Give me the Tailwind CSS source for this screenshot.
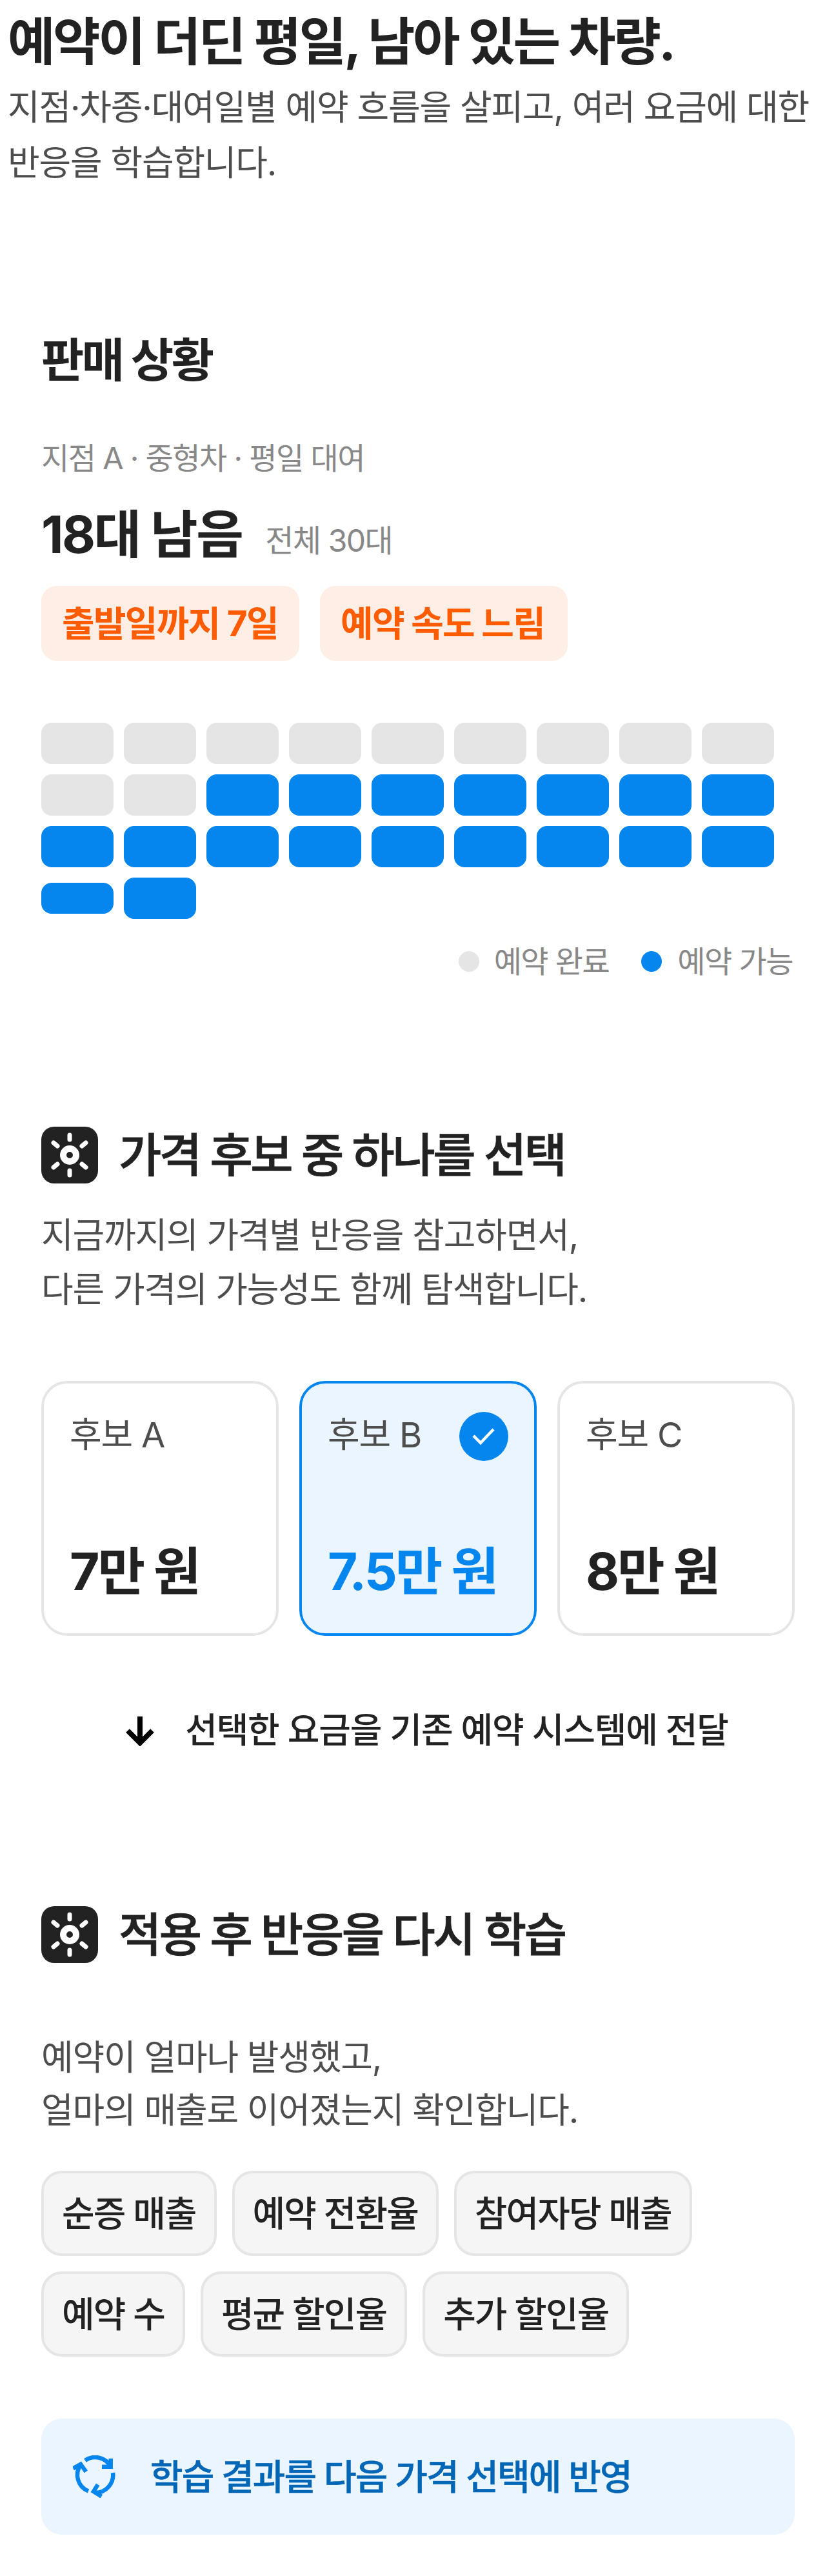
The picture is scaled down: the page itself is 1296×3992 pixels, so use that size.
<!DOCTYPE html>
<html lang="ko">
<head>
<meta charset="UTF-8">
<meta name="viewport" content="width=device-width, initial-scale=1.0">
<title>판매 상황</title>
<script src="https://cdn.jsdelivr.net/npm/@tailwindcss/browser@4"></script>
</head>
<body class="bg-white text-[#222222] font-['Inter','Noto_Sans_CJK_KR',sans-serif]">
<main class="w-[1296px] h-[3992px] overflow-hidden px-[12px] pt-[16px]">

  <!-- Intro -->
  <header>
    <h1 class="text-[80px] leading-[96px] font-bold tracking-[-3.5px]">예약이 더딘 평일, 남아 있는 차량.</h1>
    <p class="mt-[12px] text-[54px] leading-[86px] tracking-[-1.2px] text-[#4d4d4d]">지점·차종·대여일별 예약 흐름을 살피고, 여러 요금에 대한 반응을 학습합니다.</p>
  </header>

  <!-- Sales status -->
  <section class="px-[52px] mt-[218px]">
    <h2 class="text-[72px] leading-[88px] font-bold tracking-[-3.5px]">판매 상황</h2>
    <p class="mt-[78px] text-[47px] leading-[60px] tracking-[-1.5px] text-[#888888]">지점 A · 중형차 · 평일 대여</p>
    <div class="mt-[40px] flex items-end gap-[36px]">
      <strong class="text-[80px] leading-[96px] font-bold tracking-[-2.5px]">18대 남음</strong>
      <span class="text-[48px] leading-[76px] tracking-[-1.5px] text-[#888888]">전체 30대</span>
    </div>
    <div class="mt-[32px] flex gap-[32px]">
      <span class="w-[400px] h-[116px] pl-[32px] flex items-center rounded-[24px] bg-[#ffeee6] text-[#ff5c00] text-[55px] tracking-[-1.7px] font-bold">출발일까지 7일</span>
      <span class="w-[384px] h-[116px] pl-[32px] flex items-center rounded-[24px] bg-[#ffeee6] text-[#ff5c00] text-[55px] tracking-[-1.7px] font-bold">예약 속도 느림</span>
    </div>
    <div class="mt-[96px] flex flex-wrap items-center gap-[16px] w-[1136px]">
      <i class="block w-[112px] h-[64px] rounded-[16px] bg-[#e5e5e5]"></i>
      <i class="block w-[112px] h-[64px] rounded-[16px] bg-[#e5e5e5]"></i>
      <i class="block w-[112px] h-[64px] rounded-[16px] bg-[#e5e5e5]"></i>
      <i class="block w-[112px] h-[64px] rounded-[16px] bg-[#e5e5e5]"></i>
      <i class="block w-[112px] h-[64px] rounded-[16px] bg-[#e5e5e5]"></i>
      <i class="block w-[112px] h-[64px] rounded-[16px] bg-[#e5e5e5]"></i>
      <i class="block w-[112px] h-[64px] rounded-[16px] bg-[#e5e5e5]"></i>
      <i class="block w-[112px] h-[64px] rounded-[16px] bg-[#e5e5e5]"></i>
      <i class="block w-[112px] h-[64px] rounded-[16px] bg-[#e5e5e5]"></i>
      <i class="block w-[112px] h-[64px] rounded-[16px] bg-[#e5e5e5]"></i>
      <i class="block w-[112px] h-[64px] rounded-[16px] bg-[#e5e5e5]"></i>
      <i class="block w-[112px] h-[64px] rounded-[16px] bg-[#0486ee]"></i>
      <i class="block w-[112px] h-[64px] rounded-[16px] bg-[#0486ee]"></i>
      <i class="block w-[112px] h-[64px] rounded-[16px] bg-[#0486ee]"></i>
      <i class="block w-[112px] h-[64px] rounded-[16px] bg-[#0486ee]"></i>
      <i class="block w-[112px] h-[64px] rounded-[16px] bg-[#0486ee]"></i>
      <i class="block w-[112px] h-[64px] rounded-[16px] bg-[#0486ee]"></i>
      <i class="block w-[112px] h-[64px] rounded-[16px] bg-[#0486ee]"></i>
      <i class="block w-[112px] h-[64px] rounded-[16px] bg-[#0486ee]"></i>
      <i class="block w-[112px] h-[64px] rounded-[16px] bg-[#0486ee]"></i>
      <i class="block w-[112px] h-[64px] rounded-[16px] bg-[#0486ee]"></i>
      <i class="block w-[112px] h-[64px] rounded-[16px] bg-[#0486ee]"></i>
      <i class="block w-[112px] h-[64px] rounded-[16px] bg-[#0486ee]"></i>
      <i class="block w-[112px] h-[64px] rounded-[16px] bg-[#0486ee]"></i>
      <i class="block w-[112px] h-[64px] rounded-[16px] bg-[#0486ee]"></i>
      <i class="block w-[112px] h-[64px] rounded-[16px] bg-[#0486ee]"></i>
      <i class="block w-[112px] h-[64px] rounded-[16px] bg-[#0486ee]"></i>
      <i class="block w-[112px] h-[48px] rounded-[16px] bg-[#0486ee]"></i>
      <i class="block w-[112px] h-[64px] rounded-[16px] bg-[#0486ee]"></i>
    </div>
    <div class="mt-[36px] pr-[3px] flex justify-end items-center text-[47px] leading-[60px] tracking-[-1.5px] text-[#888888]">
      <i class="block w-[32px] h-[32px] rounded-full bg-[#e5e5e5] mr-[23px]"></i>
      <span>예약 완료</span>
      <i class="block w-[32px] h-[32px] rounded-full bg-[#0486ee] ml-[50px] mr-[24px]"></i>
      <span>예약 가능</span>
    </div>
  </section>

  <!-- Price candidates -->
  <section class="px-[52px] mt-[226px]">
    <div class="flex items-center gap-[32px]">
      <svg class="w-[88px] h-[88px] shrink-0" viewBox="0 0 88 88">
        <rect width="88" height="88" rx="20" fill="#222222"/>
        <circle cx="44" cy="44" r="10" fill="#222222" stroke="#ffffff" stroke-width="10"/>
        <path d="M44 13V20M44 68V75M19 25L25 30M69 25L63 30M19 63L25 58M69 63L63 58" stroke="#ffffff" stroke-width="7" stroke-linecap="round" fill="none"/>
      </svg>
      <h2 class="text-[72px] leading-[88px] font-medium tracking-[-3.4px] [-webkit-text-stroke:0.8px_#222222]">가격 후보 중 하나를 선택</h2>
    </div>
    <p class="mt-[39px] text-[54px] leading-[84px] tracking-[-1.2px] text-[#4d4d4d]">지금까지의 가격별 반응을 참고하면서,<br>다른 가격의 가능성도 함께 탐색합니다.</p>
    <div class="mt-[99px] grid grid-cols-3 gap-[32px]">
      <div class="relative h-[395px] rounded-[40px] border-4 border-[#e5e5e5] px-[40px] pt-[44px]">
        <p class="text-[54px] leading-[72px] tracking-[-1.2px] text-[#4d4d4d]">후보 A</p>
        <p class="mt-[125px] text-[80px] leading-[100px] font-bold tracking-[-3px]">7만 원</p>
      </div>
      <div class="relative h-[395px] rounded-[40px] border-4 border-[#0486ee] bg-[#eaf5ff] px-[40px] pt-[44px]">
        <p class="text-[54px] leading-[72px] tracking-[-1.2px] text-[#4d4d4d]">후보 B</p>
        <p class="mt-[125px] text-[80px] leading-[100px] font-bold tracking-[-3px] text-[#0486ee]">7.5만 원</p>
        <svg class="absolute top-[44px] right-[40px] w-[76px] h-[76px]" viewBox="0 0 76 76">
          <circle cx="38" cy="38" r="38" fill="#0486ee"/>
          <path d="M22 37L33 48L53 27" stroke="#ffffff" stroke-width="4.5" fill="none"/>
        </svg>
      </div>
      <div class="relative h-[395px] rounded-[40px] border-4 border-[#e5e5e5] px-[40px] pt-[44px]">
        <p class="text-[54px] leading-[72px] tracking-[-1.2px] text-[#4d4d4d]">후보 C</p>
        <p class="mt-[125px] text-[80px] leading-[100px] font-bold tracking-[-3px]">8만 원</p>
      </div>
    </div>
    <div class="mt-[111px] pl-[28px] flex justify-center items-center gap-[48px]">
      <svg class="w-[44px] h-[48px]" viewBox="0 0 44 48">
        <path d="M22 2V42M3 24L22 43L41 24" stroke="#000000" stroke-width="8" fill="none"/>
      </svg>
      <span class="text-[54px] leading-[72px] tracking-[-1.2px] font-medium">선택한 요금을 기존 예약 시스템에 전달</span>
    </div>
  </section>

  <!-- Learning -->
  <section class="px-[52px] mt-[236px]">
    <div class="flex items-center gap-[32px]">
      <svg class="w-[88px] h-[88px] shrink-0" viewBox="0 0 88 88">
        <rect width="88" height="88" rx="20" fill="#222222"/>
        <circle cx="44" cy="44" r="10" fill="#222222" stroke="#ffffff" stroke-width="10"/>
        <path d="M44 13V20M44 68V75M19 25L25 30M69 25L63 30M19 63L25 58M69 63L63 58" stroke="#ffffff" stroke-width="7" stroke-linecap="round" fill="none"/>
      </svg>
      <h2 class="text-[72px] leading-[88px] font-medium tracking-[-3.4px] [-webkit-text-stroke:0.8px_#222222]">적용 후 반응을 다시 학습</h2>
    </div>
    <p class="mt-[106px] text-[54px] leading-[82px] tracking-[-1.2px] text-[#4d4d4d]">예약이 얼마나 발생했고,<br>얼마의 매출로 이어졌는지 확인합니다.</p>
    <div class="mt-[52px] flex flex-wrap gap-[24px]">
      <span class="h-[132px] px-[28px] flex items-center rounded-[32px] border-4 border-[#e5e5e5] bg-[#f5f5f5] text-[55px] tracking-[-1.9px] font-medium">순증 매출</span>
      <span class="h-[132px] px-[28px] flex items-center rounded-[32px] border-4 border-[#e5e5e5] bg-[#f5f5f5] text-[55px] tracking-[-1.9px] font-medium">예약 전환율</span>
      <span class="h-[132px] px-[28px] flex items-center rounded-[32px] border-4 border-[#e5e5e5] bg-[#f5f5f5] text-[55px] tracking-[-1.9px] font-medium">참여자당 매출</span>
      <span class="h-[132px] px-[28px] flex items-center rounded-[32px] border-4 border-[#e5e5e5] bg-[#f5f5f5] text-[55px] tracking-[-1.9px] font-medium">예약 수</span>
      <span class="h-[132px] px-[28px] flex items-center rounded-[32px] border-4 border-[#e5e5e5] bg-[#f5f5f5] text-[55px] tracking-[-1.9px] font-medium">평균 할인율</span>
      <span class="h-[132px] px-[28px] flex items-center rounded-[32px] border-4 border-[#e5e5e5] bg-[#f5f5f5] text-[55px] tracking-[-1.9px] font-medium">추가 할인율</span>
    </div>
    <div class="mt-[96px] h-[180px] pl-[49px] flex items-center gap-[54px] rounded-[32px] bg-[#eaf5ff]">
      <svg class="w-[66px] h-[66px] shrink-0" viewBox="0 0 66 66">
        <g stroke="#0486ee" stroke-width="6.5" fill="none">
          <path d="M19 8A27.2 27.2 0 0 1 58.7 17.7"/>
          <path d="M58.7 5V17.7H45"/>
          <path d="M62 27A27.2 27.2 0 0 1 35 57.8"/>
          <path d="M38.7 45.3L32 56L44.3 63.7"/>
          <path d="M24 55.5A27.2 27.2 0 0 1 12 14.5"/>
          <path d="M20.3 25.3L12 13.7L0.3 20.3"/>
        </g>
      </svg>
      <span class="text-[55px] leading-[72px] tracking-[-1.9px] font-medium text-[#0066b5] [-webkit-text-stroke:0.5px_#0066b5]">학습 결과를 다음 가격 선택에 반영</span>
    </div>
  </section>

</main>
</body>
</html>
